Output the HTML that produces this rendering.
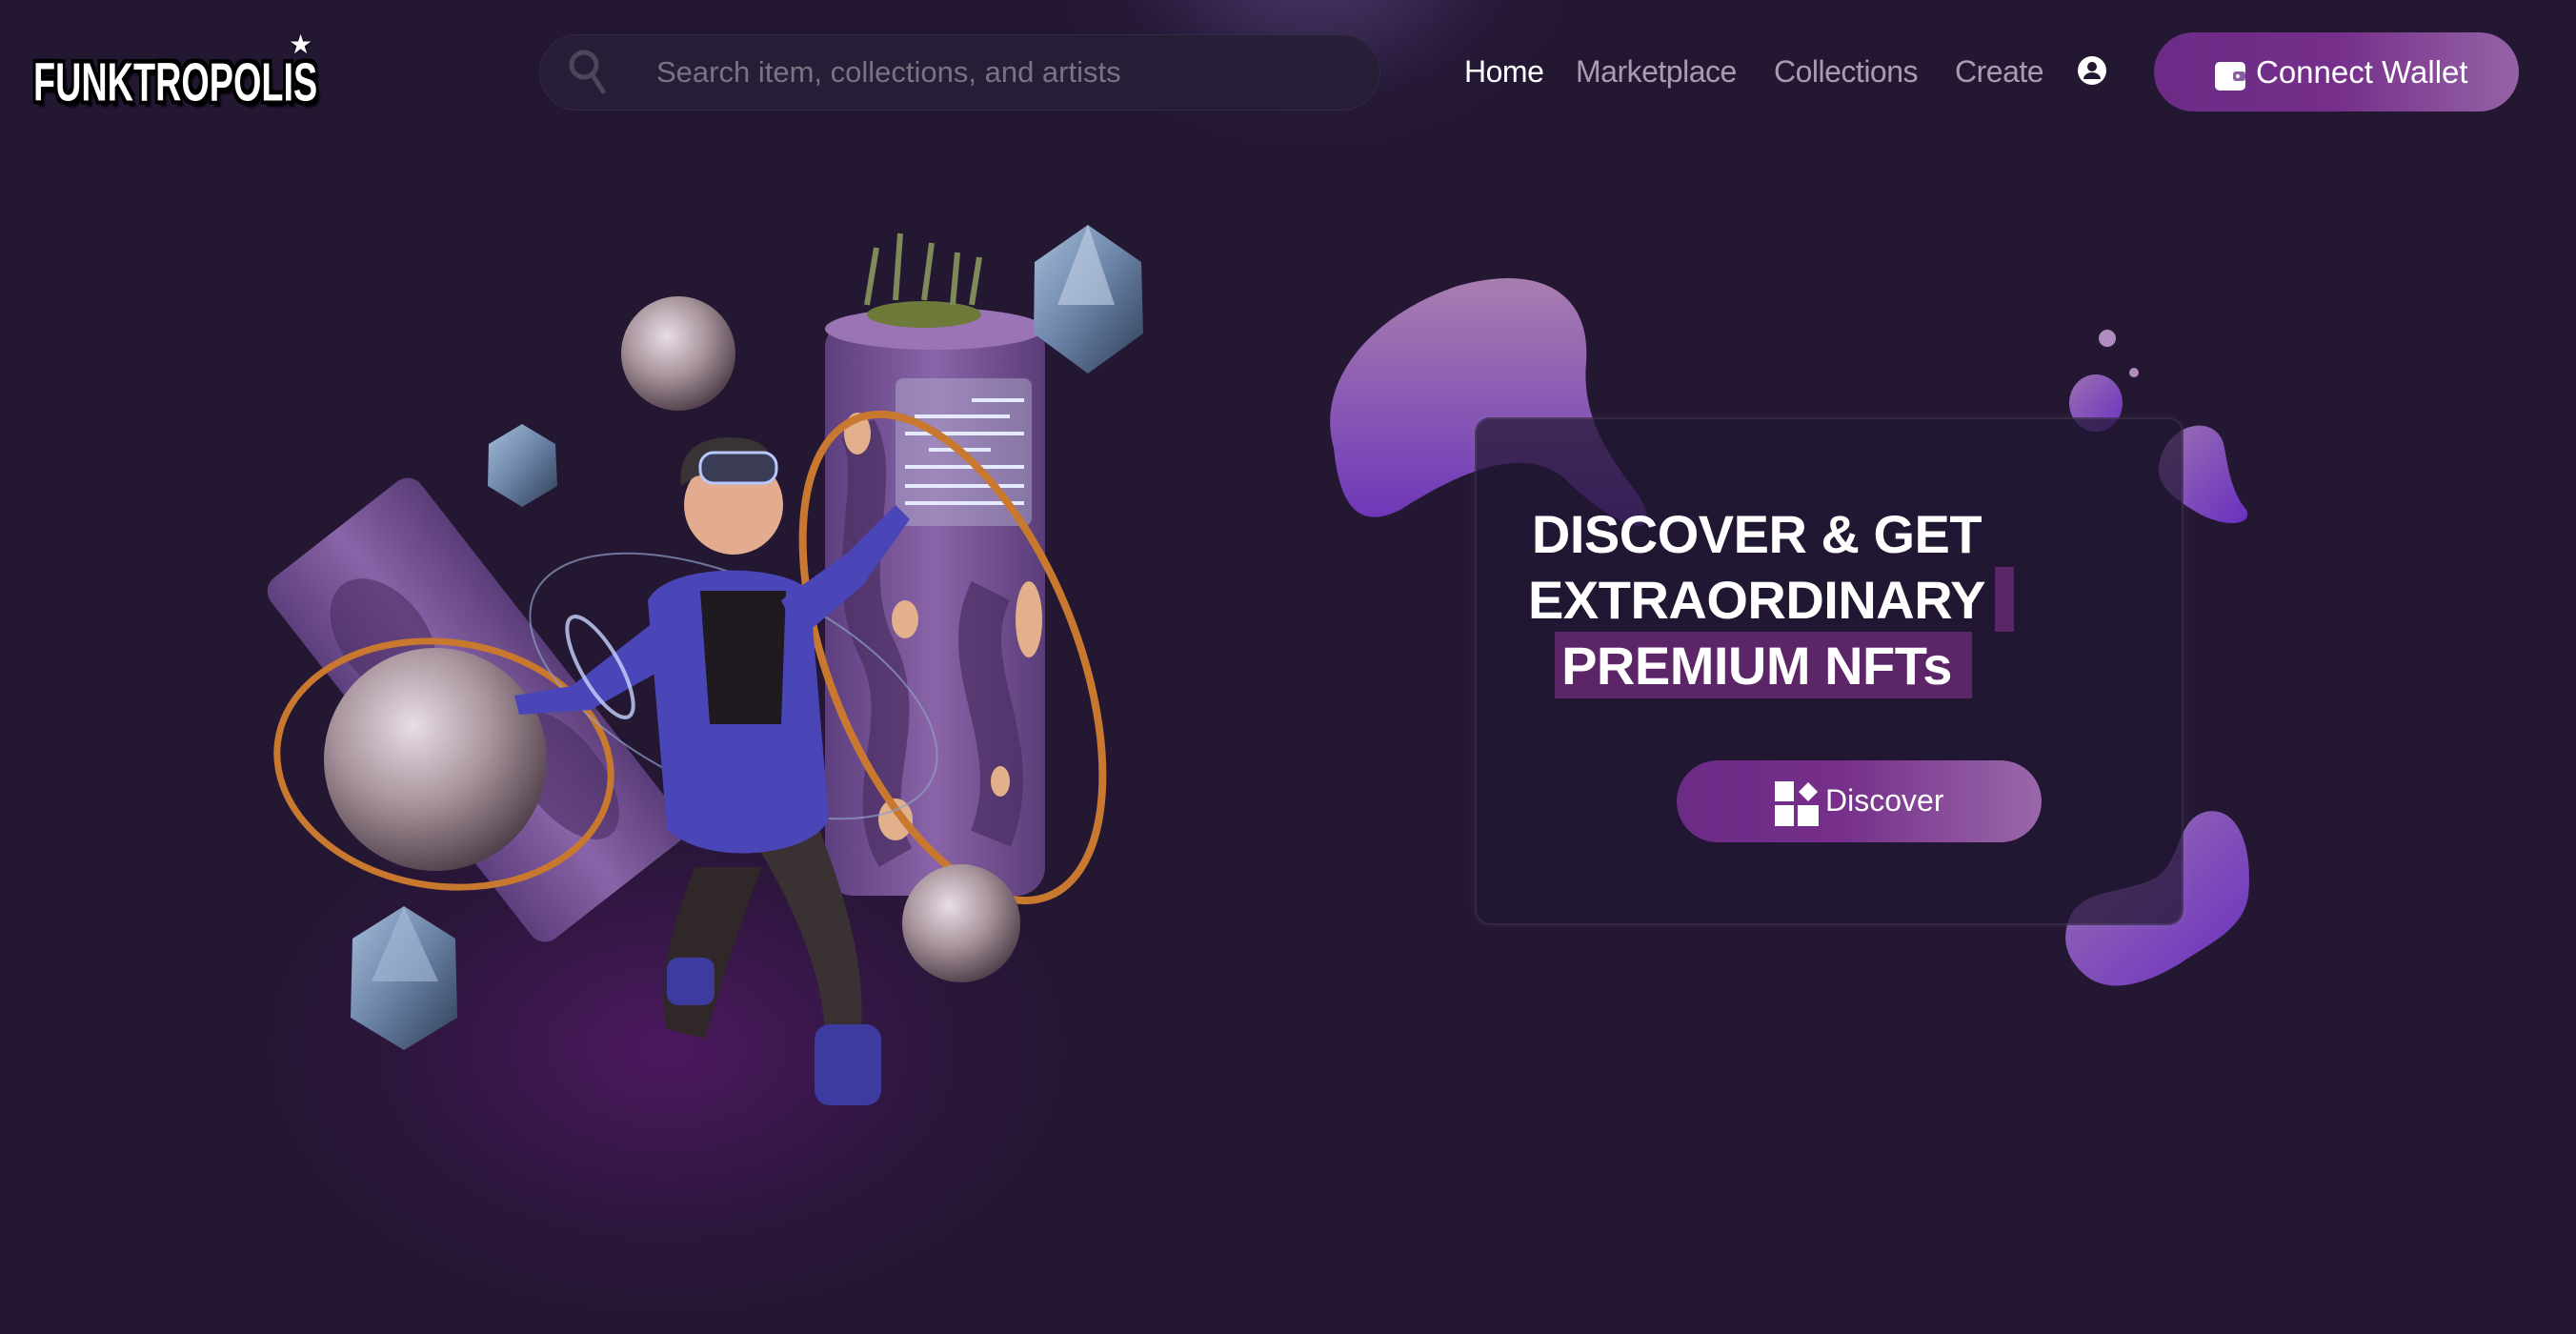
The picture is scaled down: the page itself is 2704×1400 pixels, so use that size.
<!DOCTYPE html>
<html><head><meta charset="utf-8"><style>
*{margin:0;padding:0;box-sizing:border-box}
body{width:2704px;height:1348px;overflow:hidden;background:#231732;font-family:"Liberation Sans",sans-serif;position:relative}
.abs{position:absolute}
.nav a{position:absolute;top:57px;font-size:32px;color:#a89cb2;text-decoration:none;letter-spacing:-0.5px}
</style></head><body>
<div class="abs" style="left:1100px;top:-260px;width:560px;height:420px;border-radius:50%;background:radial-gradient(ellipse at center,rgba(110,90,160,.55),rgba(60,40,100,.15) 50%,rgba(35,23,50,0) 72%)"></div>
<div class="abs" style="left:250px;top:800px;width:900px;height:600px;border-radius:50%;background:radial-gradient(ellipse at center,rgba(90,25,110,.75),rgba(60,20,80,.35) 45%,rgba(35,23,50,0) 72%)"></div>

<!-- logo -->
<div class="abs" style="left:35px;top:58px;font-weight:900;font-size:42px;line-height:42px;color:#fff;letter-spacing:0px;white-space:nowrap;text-shadow:-3px 0 0 #000,3px 0 0 #000,0 -3px 0 #000,0 3px 0 #000,-3px -3px 0 #000,3px 3px 0 #000,-3px 3px 0 #000,3px -3px 0 #000,4px 5px 2px #000;transform:scale(0.9,1.35);transform-origin:left top">FUNKTROPOLIS</div>
<div class="abs" style="left:303px;top:30px;color:#fff;font-size:28px;text-shadow:0 0 3px #000">★</div>

<!-- search -->
<div class="abs" style="left:566px;top:36px;width:883px;height:80px;border-radius:40px;background:rgba(40,30,55,.85);border:1px solid rgba(255,255,255,.05)"></div>
<svg class="abs" style="left:595px;top:48px" width="44" height="56" viewBox="0 0 44 56"><circle cx="18" cy="20" r="13" fill="none" stroke="#4e4558" stroke-width="5"/><line x1="27" y1="31" x2="38" y2="48" stroke="#4e4558" stroke-width="5" stroke-linecap="round"/></svg>
<div class="abs" style="left:689px;top:58px;font-size:31px;color:#7b7381">Search item, collections, and artists</div>

<div class="nav">
<a style="left:1537px;color:#fff">Home</a>
<a style="left:1654px">Marketplace</a>
<a style="left:1862px">Collections</a>
<a style="left:2052px">Create</a>
</div>
<svg class="abs" style="left:2180px;top:58px" width="32" height="32" viewBox="0 0 32 32"><circle cx="16" cy="16" r="15" fill="#fff"/><circle cx="16" cy="12" r="5" fill="#231732"/><path d="M7 25a9 7 0 0 1 18 0z" fill="#231732"/></svg>

<div class="abs" style="left:2261px;top:34px;width:383px;height:83px;border-radius:42px;background:linear-gradient(90deg,#6b2b86 0%,#752f8a 50%,#9663a6 100%)"></div>
<svg class="abs" style="left:2324px;top:63px" width="34" height="34" viewBox="0 0 34 34"><rect x="1" y="2" width="32" height="30" rx="5" fill="#fff"/><rect x="20" y="12" width="13" height="10" rx="3" fill="#8a5ea0"/><circle cx="25" cy="17" r="2" fill="#fff"/></svg>
<div class="abs" style="left:2368px;top:57px;font-size:33px;color:#fff">Connect Wallet</div>

<!-- blobs -->
<svg class="abs" style="left:0;top:0" width="2704" height="1348">
<defs>
<linearGradient id="bg1" x1="0" y1="0" x2="0" y2="1"><stop offset="0" stop-color="#a87eb0"/><stop offset="1" stop-color="#6c35b8"/></linearGradient>
<linearGradient id="bg2" x1="0" y1="0" x2="1" y2="1"><stop offset="0" stop-color="#9a72b2"/><stop offset="1" stop-color="#6a2fc0"/></linearGradient>
</defs>
<path d="M1400 470C1380 400 1440 330 1530 300C1620 275 1670 310 1665 380C1660 440 1690 480 1720 520C1750 570 1700 560 1640 500C1600 470 1540 490 1470 535C1420 560 1405 520 1400 470Z" fill="url(#bg1)"/>
<circle cx="2212" cy="355" r="9" fill="#b08cc0"/>
<circle cx="2240" cy="391" r="5" fill="#b08cc0"/>
<ellipse cx="2200" cy="423" rx="28" ry="30" fill="url(#bg2)"/>
<path d="M2268 480C2280 440 2330 435 2335 470C2340 500 2345 520 2358 535C2365 550 2340 555 2310 540C2275 520 2260 505 2268 480Z" fill="url(#bg2)"/>
<path d="M2170 970C2180 930 2230 940 2265 920C2290 900 2285 860 2315 852C2350 845 2365 890 2360 940C2355 975 2320 990 2290 1010C2250 1035 2210 1045 2185 1020C2170 1005 2165 990 2170 970Z" fill="url(#bg2)"/>
</svg>

<!-- card -->
<div class="abs" style="left:1548px;top:438px;width:744px;height:533px;border-radius:16px;background:rgba(35,23,50,.72);border:2px solid rgba(255,255,255,.08);box-shadow:0 0 12px rgba(255,255,255,.06)"></div>
<div class="abs" style="left:2094px;top:595px;width:20px;height:68px;background:#5b2567"></div>
<div class="abs" style="left:1632px;top:663px;width:438px;height:70px;background:#5b2567"></div>
<div class="abs" style="left:1548px;top:526px;width:592px;text-align:center;color:#fff;font-size:56px;font-weight:bold;line-height:69px;letter-spacing:-0.5px">DISCOVER &amp; GET<br>EXTRAORDINARY<br>PREMIUM NFTs</div>

<div class="abs" style="left:1760px;top:798px;width:383px;height:86px;border-radius:43px;background:linear-gradient(90deg,#6b2b86 0%,#762f8a 45%,#9a68aa 100%)"></div>
<svg class="abs" style="left:1863px;top:820px" width="46" height="47" viewBox="0 0 46 47"><rect x="0" y="0" width="20" height="21" fill="#fff"/><rect x="0" y="25" width="20" height="22" fill="#fff"/><rect x="24" y="25" width="22" height="22" fill="#fff"/><path d="M35 1L45 11L35 21L25 11Z" fill="#fff"/></svg>
<div class="abs" style="left:1916px;top:822px;font-size:32px;color:#fff">Discover</div>

<!-- illustration -->
<svg class="abs" style="left:0;top:0" width="1300" height="1348">
<defs>
<radialGradient id="sp" cx=".4" cy=".35" r=".7"><stop offset="0" stop-color="#e8dde6"/><stop offset=".5" stop-color="#a8949c"/><stop offset="1" stop-color="#4a3a45"/></radialGradient>
<linearGradient id="cyl" x1="0" y1="0" x2="1" y2="0"><stop offset="0" stop-color="#5d3f7e"/><stop offset=".5" stop-color="#8a64a8"/><stop offset="1" stop-color="#5a3d78"/></linearGradient>
<linearGradient id="ico" x1="0" y1="0" x2="1" y2="1"><stop offset="0" stop-color="#a6bedb"/><stop offset=".5" stop-color="#6a82a6"/><stop offset="1" stop-color="#2e3d55"/></linearGradient>
</defs>
<!-- left tilted cylinder -->
<g transform="translate(500 745) rotate(-38)">
<rect x="-100" y="-240" width="200" height="480" rx="18" fill="url(#cyl)"/>
<ellipse cx="-30" cy="-120" rx="45" ry="70" fill="#4a2d62" opacity=".6"/>
<ellipse cx="30" cy="110" rx="40" ry="80" fill="#4a2d62" opacity=".6"/>
<ellipse cx="-55" cy="50" rx="10" ry="16" fill="#e3b08c"/>
</g>
<!-- right tall cylinder -->
<rect x="866" y="335" width="231" height="605" rx="30" fill="url(#cyl)"/>
<ellipse cx="981" cy="345" rx="115" ry="22" fill="#9a74b4"/>
<path d="M900 450C930 500 880 600 920 680C960 760 900 830 940 900" stroke="#4a2d62" stroke-width="40" fill="none" opacity=".7"/>
<path d="M1040 620C1000 700 1080 780 1040 880" stroke="#4a2d62" stroke-width="45" fill="none" opacity=".7"/>
<ellipse cx="900" cy="455" rx="14" ry="22" fill="#e3b08c"/>
<ellipse cx="950" cy="650" rx="14" ry="20" fill="#e3b08c"/>
<ellipse cx="1080" cy="650" rx="14" ry="40" fill="#e3b08c"/>
<ellipse cx="1050" cy="820" rx="10" ry="16" fill="#e3b08c"/>
<ellipse cx="940" cy="860" rx="18" ry="22" fill="#e3b08c"/>
<ellipse cx="970" cy="330" rx="60" ry="14" fill="#6e7a3a"/>
<path d="M910 320l10-60M940 315l5-70M970 315l8-60M1000 320l5-55M1020 320l8-50" stroke="#7f8a5a" stroke-width="6"/>
<!-- screen panel -->
<rect x="940" y="397" width="143" height="155" rx="8" fill="#b8b6d4" opacity=".45"/>
<g stroke="#e6eaff" stroke-width="4"><line x1="1020" y1="420" x2="1075" y2="420"/><line x1="960" y1="437" x2="1060" y2="437"/><line x1="950" y1="455" x2="1075" y2="455"/><line x1="975" y1="472" x2="1040" y2="472"/><line x1="950" y1="490" x2="1075" y2="490"/><line x1="950" y1="510" x2="1075" y2="510"/><line x1="950" y1="528" x2="1075" y2="528"/></g>
<!-- rings -->
<ellipse cx="1000" cy="690" rx="130" ry="270" transform="rotate(-22 1000 690)" fill="none" stroke="#c9782f" stroke-width="8"/>
<ellipse cx="466" cy="802" rx="176" ry="128" transform="rotate(8 466 802)" fill="none" stroke="#c9782f" stroke-width="7"/>
<ellipse cx="770" cy="720" rx="230" ry="110" transform="rotate(25 770 720)" fill="none" stroke="#8fa0c8" stroke-width="2" opacity=".7"/>
<!-- spheres -->
<circle cx="712" cy="371" r="60" fill="url(#sp)"/>
<circle cx="457" cy="797" r="117" fill="url(#sp)"/>
<circle cx="1009" cy="969" r="62" fill="url(#sp)"/>
<!-- icosahedrons -->
<polygon points="1142,236 1198,275 1200,350 1142,392 1085,350 1086,275" fill="url(#ico)"/>
<polygon points="1142,236 1170,320 1110,320" fill="#c6d4e8" opacity=".6"/>
<polygon points="548,445 583,466 585,510 548,532 512,510 513,466" fill="url(#ico)"/>
<polygon points="424,951 478,985 480,1068 424,1102 368,1068 370,985" fill="url(#ico)"/>
<polygon points="424,951 460,1030 390,1030" fill="#a8bcd8" opacity=".6"/>
<!-- character -->
<path d="M730 910C700 980 690 1040 700 1080L740 1090C760 1020 780 960 800 910Z" fill="#2f2728"/>
<path d="M790 880C840 960 870 1040 865 1100L900 1110C915 1030 890 950 860 870Z" fill="#3a3132"/>
<rect x="700" y="1005" width="50" height="50" rx="12" fill="#3d3aa0"/>
<rect x="855" y="1075" width="70" height="85" rx="16" fill="#3d3aa0"/>
<path d="M680 630C700 590 820 590 850 620L870 860C850 900 740 910 700 870Z" fill="#4a46b8"/>
<path d="M735 620L825 620L820 760L745 760Z" fill="#1e1a1f"/>
<path d="M690 650L600 720L540 730L545 750L620 745L700 700Z" fill="#4a46b8"/>
<path d="M820 630L890 580L940 530L955 545L905 615L840 670Z" fill="#4a46b8"/>
<circle cx="770" cy="530" r="52" fill="#e3ab8f"/>
<path d="M715 510C710 470 740 455 780 460C800 462 810 475 810 485L730 500Z" fill="#3a3336"/>
<rect x="735" y="475" width="80" height="32" rx="14" fill="#3a3d55" stroke="#b8c8ff" stroke-width="3"/>
<ellipse cx="630" cy="700" rx="20" ry="60" transform="rotate(-30 630 700)" fill="none" stroke="#c8d4ff" stroke-width="4" opacity=".8"/>
</svg>
</body></html>
